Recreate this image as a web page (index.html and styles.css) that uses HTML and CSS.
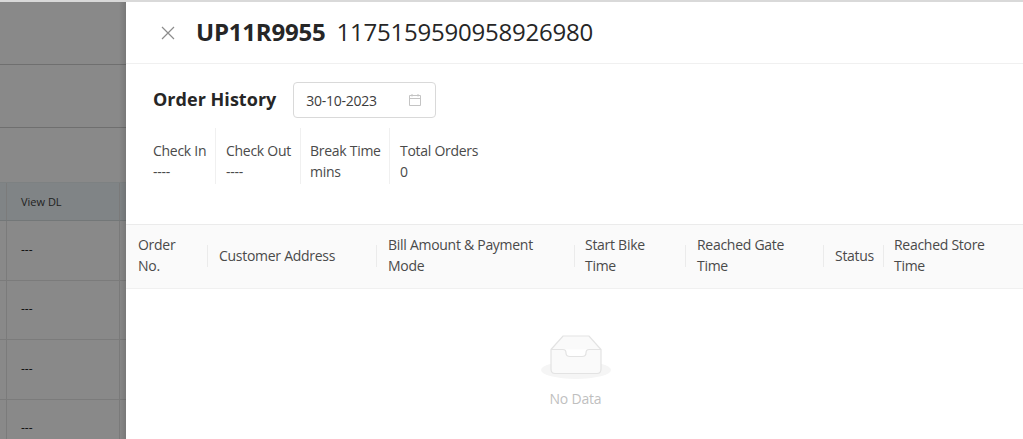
FILE: index.html
```html
<!DOCTYPE html>
<html lang="en">
<head>
<meta charset="utf-8">
<title>Order History</title>
<link rel="stylesheet" href="styles.css">
</head>
<body>
<div class="app">
  <div class="topstrip"></div>
  <div class="page">
    <main class="bg">
      <div class="bg-band bg-band-1"></div>
      <div class="bg-band bg-band-2"></div>
      <div class="bg-head"><div class="bg-cell">View DL</div></div>
      <div class="bg-row"><div class="bg-cell">---</div></div>
      <div class="bg-row"><div class="bg-cell">---</div></div>
      <div class="bg-row"><div class="bg-cell">---</div></div>
      <div class="bg-row"><div class="bg-cell">---</div></div>
    </main>
    <aside class="drawer">
      <header class="drawer-head">
        <svg class="close" viewBox="0 0 14 14" width="14" height="14" aria-label="Close"><path d="M1 1 L13 13 M13 1 L1 13" fill="none" stroke="#8c8c8c" stroke-width="1.2"/></svg>
        <h1 class="title"><strong>UP11R9955</strong><span class="title-id">1175159590958926980</span></h1>
      </header>
      <div class="history">
        <h2 class="history-title">Order History</h2>
        <div class="date">
          <span>30-10-2023</span>
          <svg viewBox="0 0 14 14" width="14" height="14" class="cal"><path d="M1.5 2.5 H12.5 V12.5 H1.5 Z M1.5 5.5 H12.5 M4 1 V3.5 M10 1 V3.5" fill="none" stroke="#c4c4c4" stroke-width="1"/></svg>
        </div>
      </div>
      <div class="stats">
        <div class="stat stat-in"><div>Check In</div><div>----</div></div>
        <div class="stat stat-out"><div>Check Out</div><div>----</div></div>
        <div class="stat stat-break"><div>Break Time</div><div>mins</div></div>
        <div class="stat stat-total"><div>Total Orders</div><div>0</div></div>
      </div>
      <div class="thead">
        <div class="th th-order">Order No.</div>
        <div class="th th-addr">Customer Address</div>
        <div class="th th-bill">Bill Amount &amp; Payment Mode</div>
        <div class="th th-bike">Start Bike Time</div>
        <div class="th th-gate">Reached Gate Time</div>
        <div class="th th-status">Status</div>
        <div class="th th-store">Reached Store Time</div>
      </div>
      <div class="empty">
        <svg class="empty-icon" width="70" height="46" viewBox="0 0 70 46">
          <ellipse cx="35" cy="35" rx="35" ry="9" fill="#f5f5f5"/>
          <path d="M10 14.500 L22 1 H48 L60 14.500 V34 Q60 38.500 56 38.500 H14 Q10 38.500 10 34 Z" fill="#fafafa" stroke="#e3e3e3" stroke-width="1.200"/>
          <path d="M10 14.500 H22 Q25 14.500 25 18 Q25 21.500 29 21.500 H41 Q45 21.500 45 18 Q45 14.500 48 14.500 H60" fill="#fff" stroke="#e3e3e3" stroke-width="1.200"/>
        </svg>
        <div class="empty-text">No Data</div>
      </div>
    </aside>
  </div>
</div>
</body>
</html>
```
FILE: styles.css
```css
* { box-sizing: border-box; }
html, body { margin: 0; height: 100%; overflow: hidden; }
body { font-family: "Open Sans", "Liberation Sans", sans-serif; color: #333; background: #898989; }
.app { width: 1023px; height: 439px; display: flex; flex-direction: column; overflow: hidden; }
.topstrip { height: 2px; flex: none; background: #d9d9d9; }
.page { flex: 1; position: relative; display: flex; overflow: hidden; }

.bg { width: 126px; flex: none; position: relative; background: #898989; }
.bg::after { content: ""; position: absolute; top: 0; bottom: 0; right: 0; width: 7px; background: linear-gradient(to right, rgba(0,0,0,0), rgba(0,0,0,.12)); }
.bg-band { border-bottom: 1px solid #6f6f6f; }
.bg-band-1 { height: 63px; }
.bg-band-2 { height: 63px; }
.bg-head { margin-top: 54px; height: 39px; background: #808486; border-top: 1px solid #7d8182; border-bottom: 1px solid #737778; padding: 0 6px; }
.bg-head .bg-cell { font-size: 11px; color: #222; height: 37px; padding-bottom: 0; }
.bg-row { height: 59.500px; border-bottom: 1px solid #7b7b7b; padding: 0 6px; }
.bg-cell { height: 100%; width: 114px; border-left: 1px solid #7b7b7b; border-right: 1px solid #7b7b7b; padding-left: 14px; padding-bottom: 2px; display: flex; align-items: center; font-size: 12px; color: #111; }

.drawer { flex: 1; min-width: 0; background: #fff; display: flex; flex-direction: column; }
.drawer-head { height: 62px; flex: none; display: flex; align-items: center; padding-left: 35px; border-bottom: 1px solid #f0f0f0; }
.title { margin: -2px 0 0 21px; font-size: 24px; line-height: 32px; font-weight: 400; color: #262626; letter-spacing: -.22px; }
.title strong { font-weight: 700; }
.title-id { margin-left: 11px; }

.history { display: flex; align-items: center; margin-top: 18px; padding-left: 27px; }
.history-title { margin: -2px 0 0; font-size: 18px; line-height: 36px; font-weight: 700; color: #262626; letter-spacing: .03px; }
.date { margin: 0 0 0 17px; width: 143px; height: 36px; border: 1px solid #d9d9d9; border-radius: 4px; display: flex; align-items: center; justify-content: space-between; padding: 0 13px 0 12px; font-size: 14px; color: #3c3c3c; letter-spacing: -.28px; }

.stats { display: flex; margin-top: 10px; padding-left: 27px; font-size: 14px; line-height: 21px; color: #4a4a4a; letter-spacing: -.28px; }
.stat { height: 56px; padding-top: 12px; border-left: 1px solid #f0f0f0; flex: none; }
.stat-in { width: 62px; border-left: 0; }
.stat-out { width: 85px; padding-left: 10px; }
.stat-break { width: 89px; padding-left: 9px; }
.stat-total { padding-left: 10px; }

.thead { margin-top: 40px; height: 65px; flex: none; display: flex; align-items: center; padding-bottom: 3px; background: #fafafa; border-top: 1px solid #ebebeb; border-bottom: 1px solid #f0f0f0; font-size: 14px; line-height: 21px; color: #4a4a4a; letter-spacing: -.28px; }
.th { flex: none; padding: 0 10px 0 12px; position: relative; }
.th + .th::before { content: ""; position: absolute; left: 0; top: 50%; margin-top: -10px; height: 22px; width: 1px; background: #ebebeb; }
.th-order { width: 81px; }
.th-addr { width: 169px; }
.th-bill { width: 198px; }
.th-bike { width: 111px; padding-left: 11px; }
.th-gate { width: 138px; }
.th-status { width: 60px; }
.th-store { width: 130px; padding-left: 11px; }
.th-store::before { width: 2px; left: -1px; }

.empty { display: flex; flex-direction: column; align-items: center; margin-top: 46px; padding-left: 2px; }
.empty-text { margin-top: 8px; font-size: 14px; line-height: 20px; color: #bfbfbf; letter-spacing: -.2px; }
```
